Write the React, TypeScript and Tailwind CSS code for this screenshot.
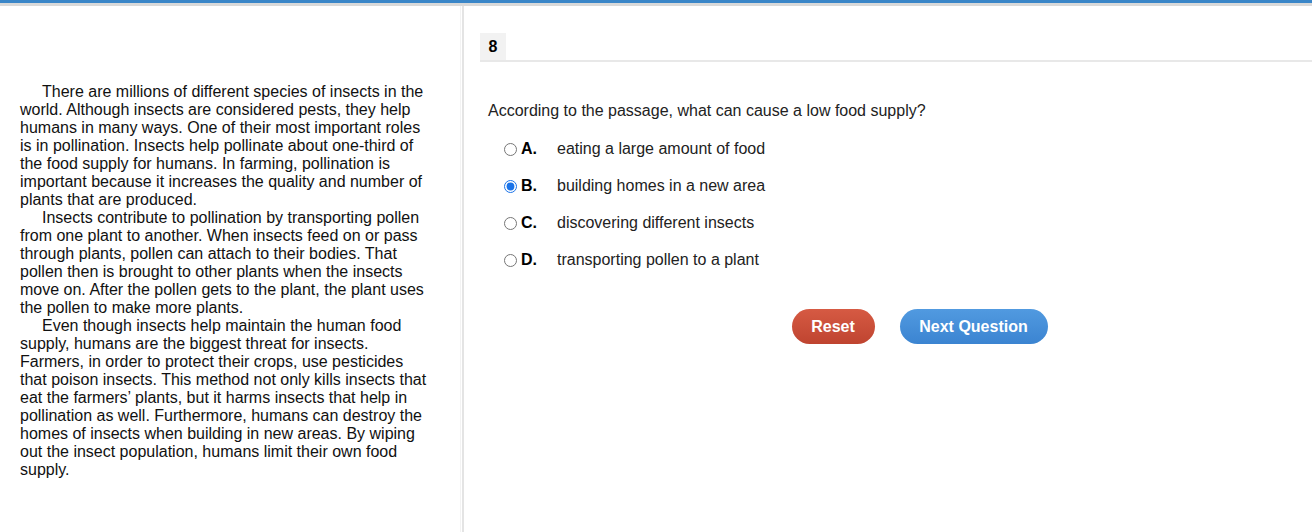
import React from "react";

const PARAGRAPHS = [
  "There are millions of different species of insects in the world. Although insects are considered pests, they help humans in many ways. One of their most important roles is in pollination. Insects help pollinate about one-third of the food supply for humans. In farming, pollination is important because it increases the quality and number of plants that are produced.",
  "Insects contribute to pollination by transporting pollen from one plant to another. When insects feed on or pass through plants, pollen can attach to their bodies. That pollen then is brought to other plants when the insects move on. After the pollen gets to the plant, the plant uses the pollen to make more plants.",
  "Even though insects help maintain the human food supply, humans are the biggest threat for insects. Farmers, in order to protect their crops, use pesticides that poison insects. This method not only kills insects that eat the farmers\u2019 plants, but it harms insects that help in pollination as well. Furthermore, humans can destroy the homes of insects when building in new areas. By wiping out the insect population, humans limit their own food supply.",
];

const OPTIONS = [
  { key: "A", text: "eating a large amount of food" },
  { key: "B", text: "building homes in a new area" },
  { key: "C", text: "discovering different insects" },
  { key: "D", text: "transporting pollen to a plant" },
];

export default function App() {
  const selected = "B";
  return (
    <div className="h-[532px] w-[1312px] overflow-hidden bg-white font-['Liberation_Sans',Arial,sans-serif] text-[#111]">
      {/* top bars */}
      <div className="h-[3px] bg-[#3a86c8]" />
      <div className="h-[3px] bg-[#d9d9d9]" />

      <div className="flex h-[526px]">
        {/* Passage */}
        <div className="w-[460px] shrink-0 pl-5 pr-[30px] pt-[77px]">
          {PARAGRAPHS.map((p, i) => (
            <p key={i} className="indent-[22px] text-[16px] leading-[18px]">
              {p}
            </p>
          ))}
        </div>

        {/* Divider */}
        <div className="w-[4px] shrink-0 border-l border-r-2 border-l-[#f3f3f3] border-r-[#e4e4e4]" />

        {/* Question panel */}
        <div className="flex-1 pl-[16px] pt-[27px]">
          <div className="flex border-b-2 border-[#e8e8e8]">
            <div className="flex h-[27px] w-[26px] items-center justify-center bg-[#f2f2f2] text-[16px] font-bold text-black">
              8
            </div>
          </div>

          <div className="pl-2 pt-[40px] text-[16px] leading-[18px] text-[#222]">
            According to the passage, what can cause a low food supply?
          </div>

          <div className="mt-[20px] flex flex-col gap-[19px] pl-[24px]">
            {OPTIONS.map((o) => (
              <label key={o.key} className="flex h-[18px] items-center text-[16px] leading-[18px] text-[#222]">
                <input
                  type="radio"
                  name="answer"
                  readOnly
                  checked={selected === o.key}
                  className="m-0 h-[13px] w-[13px] accent-[#1a73e8]"
                />
                <span className="ml-[4px] w-[36px] font-bold text-black">{o.key}.</span>
                <span>{o.text}</span>
              </label>
            ))}
          </div>

          <div className="mt-[40px] flex justify-center gap-[25px] pl-[47px]">
            <button className="h-[35px] w-[83px] rounded-full bg-gradient-to-b from-[#d65a43] to-[#bf4430] text-[16px] font-bold text-white">
              Reset
            </button>
            <button className="h-[35px] w-[148px] rounded-full bg-gradient-to-b from-[#519ae0] to-[#3b84d1] text-[16px] font-bold text-white">
              Next Question
            </button>
          </div>
        </div>
      </div>
    </div>
  );
}
